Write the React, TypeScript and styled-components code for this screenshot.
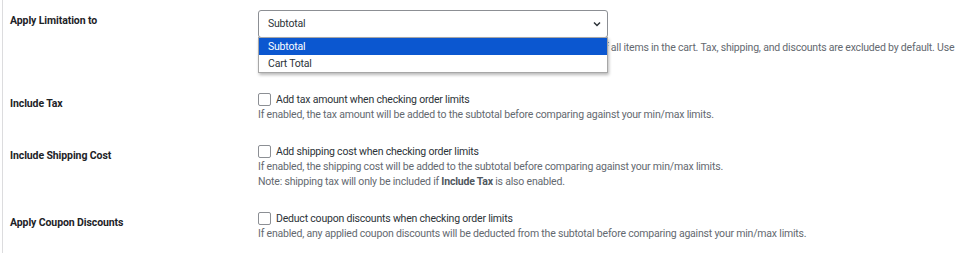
import styled, { createGlobalStyle } from 'styled-components'

const GlobalStyle = createGlobalStyle`
  html, body {
    margin: 0;
    padding: 0;
    background: #fff;
  }
  body {
    font-family: Roboto, "Liberation Sans", sans-serif;
    font-size: 10.5px;
    letter-spacing: -0.2px;
    color: #1d2327;
  }
`

const Page = styled.div`
  margin-left: 2px;
  min-height: 253px;
  border-left: 1px solid #dcdcde;
  padding: 0 10px 0 7px;
  box-sizing: border-box;
`

const Row = styled.div<{ $padTop: number }>`
  display: grid;
  grid-template-columns: 248px 1fr;
  padding: ${(p) => p.$padTop}px 0 10px;
`

const Label = styled.div<{ $top: number }>`
  padding-top: ${(p) => p.$top}px;
  line-height: 17px;
  font-weight: 700;
  letter-spacing: -0.1px;
  color: #1d2327;
`

const Field = styled.div`
  min-width: 0;
`

const SelectWrap = styled.div`
  position: relative;
  width: 350px;
`

const SelectBox = styled.div`
  display: flex;
  align-items: center;
  justify-content: space-between;
  height: 28px;
  box-sizing: border-box;
  padding: 0 5px 0 9px;
  border: 1px solid #8c8f94;
  border-radius: 3px;
  background: #fff;
  color: #2c3338;
  line-height: 26px;
`

const Dropdown = styled.ul`
  position: absolute;
  top: 27px;
  left: 0;
  right: 0;
  z-index: 2;
  margin: 0;
  padding: 0;
  list-style: none;
  background: #fff;
  border: 1px solid #a7a7a7;
  box-shadow: 1px 2px 3px rgba(0, 0, 0, 0.28);
`

const Option = styled.li<{ $active?: boolean }>`
  height: 17px;
  line-height: 17px;
  padding: 0 9px;
  background: ${(p) => (p.$active ? '#0b57d0' : '#fff')};
  color: ${(p) => (p.$active ? '#fff' : '#2c3338')};
`

const Description = styled.p<{ $first?: boolean }>`
  margin: ${(p) => (p.$first ? '-1px' : '0')} 0 0;
  line-height: 15px;
  color: #646970;
  white-space: nowrap;

  strong {
    color: #50575e;
    font-weight: 700;
  }
`

const SelectNote = styled(Description)`
  margin-top: 2px;
  padding-bottom: 15px;
`

const CheckLine = styled.label`
  display: flex;
  align-items: center;
  gap: 5px;
  height: 17px;
  line-height: 17px;
  color: #2c3338;
`

const Box = styled.span`
  display: inline-block;
  width: 11px;
  height: 11px;
  border: 1px solid #8c8f94;
  border-radius: 2px;
  background: #fff;
`

const Chevron = () => (
  <svg width="10" height="10" viewBox="0 0 10 10" aria-hidden="true">
    <path d="M2 3.5 L5 6.5 L8 3.5" fill="none" stroke="#2c3338" strokeWidth="1.5" />
  </svg>
)

const checkRows = [
  {
    label: 'Include Tax',
    check: 'Add tax amount when checking order limits',
    lines: [
      <>If enabled, the tax amount will be added to the subtotal before comparing against your min/max limits.</>,
    ],
  },
  {
    label: 'Include Shipping Cost',
    check: 'Add shipping cost when checking order limits',
    lines: [
      <>If enabled, the shipping cost will be added to the subtotal before comparing against your min/max limits.</>,
      <>
        Note: shipping tax will only be included if <strong>Include Tax</strong> is also enabled.
      </>,
    ],
  },
  {
    label: 'Apply Coupon Discounts',
    check: 'Deduct coupon discounts when checking order limits',
    lines: [
      <>If enabled, any applied coupon discounts will be deducted from the subtotal before comparing against your min/max limits.</>,
    ],
  },
]

const App = () => {
  return (
    <>
      <GlobalStyle />
      <Page>
        <Row $padTop={10}>
          <Label $top={2}>Apply Limitation to</Label>
          <Field>
            <SelectWrap>
              <SelectBox>
                <span>Subtotal</span>
                <Chevron />
              </SelectBox>
              <Dropdown>
                <Option $active>Subtotal</Option>
                <Option>Cart Total</Option>
              </Dropdown>
            </SelectWrap>
            <SelectNote>
              Select which amount is compared with your order limits. Subtotal is the sum of all items in the cart. Tax, shipping, and discounts are excluded by default. Use
            </SelectNote>
          </Field>
        </Row>
        {checkRows.map((row) => (
          <Row key={row.label} $padTop={11}>
            <Label $top={4}>{row.label}</Label>
            <Field>
              <CheckLine>
                <Box />
                {row.check}
              </CheckLine>
              {row.lines.map((line, i) => (
                <Description key={i} $first={i === 0}>
                  {line}
                </Description>
              ))}
            </Field>
          </Row>
        ))}
      </Page>
    </>
  )
}

export default App
